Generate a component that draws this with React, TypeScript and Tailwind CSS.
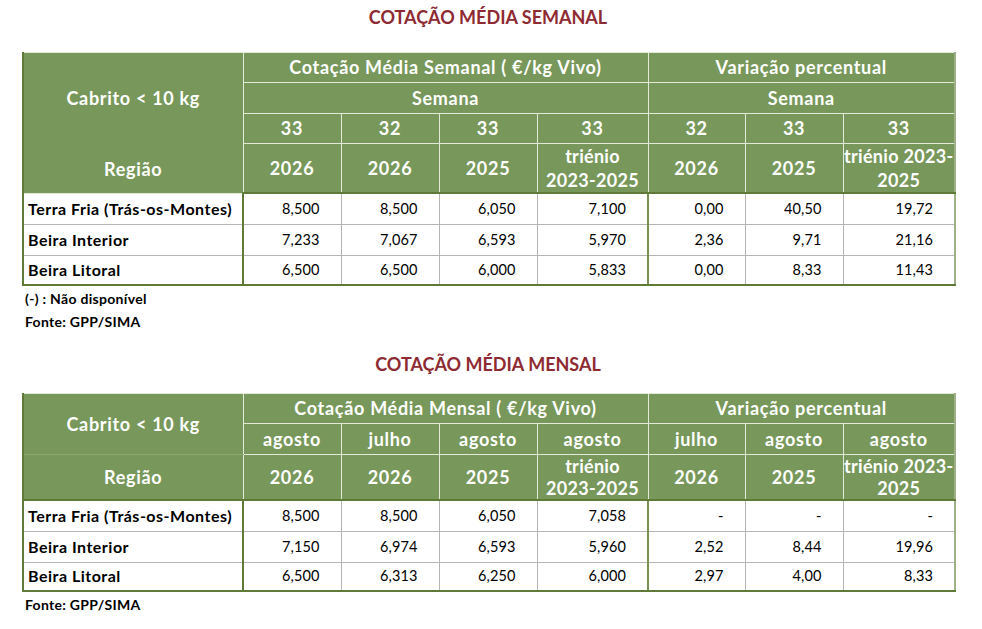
import React from "react";

const G = "bg-[#77985a]";
const hdr = `${G} text-white font-bold text-center align-middle border border-[#e3ead7] leading-[1.15] tracking-[0.7px]`;

type Row = { name: string; v: string[] };

const semanal: Row[] = [
  { name: "Terra Fria (Trás-os-Montes)", v: ["8,500", "8,500", "6,050", "7,100", "0,00", "40,50", "19,72"] },
  { name: "Beira Interior", v: ["7,233", "7,067", "6,593", "5,970", "2,36", "9,71", "21,16"] },
  { name: "Beira Litoral", v: ["6,500", "6,500", "6,000", "5,833", "0,00", "8,33", "11,43"] },
];

const mensal: Row[] = [
  { name: "Terra Fria (Trás-os-Montes)", v: ["8,500", "8,500", "6,050", "7,058", "-", "-", "-"] },
  { name: "Beira Interior", v: ["7,150", "6,974", "6,593", "5,960", "2,52", "8,44", "19,96"] },
  { name: "Beira Litoral", v: ["6,500", "6,313", "6,250", "6,000", "2,97", "4,00", "8,33"] },
];

function Cols() {
  return (
    <colgroup>
      <col className="w-[220px]" />
      <col className="w-[98px]" />
      <col className="w-[98px]" />
      <col className="w-[98px]" />
      <col className="w-[111px]" />
      <col className="w-[97px]" />
      <col className="w-[98px]" />
      <col className="w-[112px]" />
    </colgroup>
  );
}

function Body({ rows, last }: { rows: Row[]; last: string }) {
  return (
    <tbody>
      {rows.map((r, i) => (
        <tr key={r.name} className={i === rows.length - 1 ? last : "h-[31px]"}>
          <td className={`font-bold text-[16px] tracking-[0.5px] text-black pl-[4px] whitespace-nowrap border-l-2 border-l-[#5f7a37] border-r-2 border-r-[#5f7a37] border-b ${i === rows.length - 1 ? "border-b-2 border-b-[#5f7a37]" : "border-b-[#b5b5b5]"}`}>
            {r.name}
          </td>
          {r.v.map((x, j) => (
            <td
              key={j}
              className={`text-right pr-[21px] text-[14.5px] tracking-[0.1px] text-black border-b ${i === rows.length - 1 ? "border-b-2 border-b-[#5f7a37]" : "border-b-[#b5b5b5]"} ${j === 3 ? "border-r-2 border-r-[#7a9154]" : j === 6 ? "border-r-2 border-r-[#9fb089]" : "border-r border-r-[#b5b5b5]"}`}
            >
              {x}
            </td>
          ))}
        </tr>
      ))}
    </tbody>
  );
}

export default function App() {
  return (
    <div className="w-[982px] h-[629px] bg-white relative" style={{ fontFamily: "Lato, 'Liberation Sans', sans-serif" }}>
      <div className="pl-[22px]">
        <div className="w-[932px] h-[34px] flex items-center justify-center text-[#8e2a32] font-bold text-[18px] pt-[1px]">
          COTAÇÃO MÉDIA SEMANAL
        </div>
        <div className="h-[18px]" />
        <table className="border-collapse table-fixed w-[932px] border-t border-t-[#a3ab95]">
          <Cols />
          <thead className="text-[18px]">
            <tr className="h-[30px]">
              <td rowSpan={4} className={`${hdr} border-l-2 border-l-[#5f7a37] !align-top p-0`}>
                <div className="flex flex-col items-center h-[139px]">
                  <div className="h-[91px] flex items-center">Cabrito &lt; 10 kg</div>
                  <div className="flex-1 flex items-center pt-[2px]">Região</div>
                </div>
              </td>
              <td colSpan={4} className={hdr}>Cotação Média Semanal ( €/kg Vivo)</td>
              <td colSpan={3} className={`${hdr} border-r-2 border-r-[#9fb089]`}>Variação percentual</td>
            </tr>
            <tr className="h-[31px]">
              <td colSpan={4} className={hdr}>Semana</td>
              <td colSpan={3} className={`${hdr} border-r-2 border-r-[#9fb089]`}>Semana</td>
            </tr>
            <tr className="h-[30px]">
              <td className={hdr}>33</td>
              <td className={hdr}>32</td>
              <td className={hdr}>33</td>
              <td className={hdr}>33</td>
              <td className={hdr}>32</td>
              <td className={hdr}>33</td>
              <td className={`${hdr} border-r-2 border-r-[#9fb089]`}>33</td>
            </tr>
            <tr className="h-[48px]">
              <td className={`${hdr} border-b-2 border-b-[#5f7a37]`}>2026</td>
              <td className={`${hdr} border-b-2 border-b-[#5f7a37]`}>2026</td>
              <td className={`${hdr} border-b-2 border-b-[#5f7a37]`}>2025</td>
              <td className={`${hdr} border-b-2 border-b-[#5f7a37] !leading-[24px] !tracking-[0.3px]`}>triénio<br />2023-2025</td>
              <td className={`${hdr} border-b-2 border-b-[#5f7a37]`}>2026</td>
              <td className={`${hdr} border-b-2 border-b-[#5f7a37]`}>2025</td>
              <td className={`${hdr} border-b-2 border-b-[#5f7a37] border-r-2 border-r-[#9fb089] !leading-[24px] !tracking-[0.3px] whitespace-nowrap overflow-hidden`}>triénio 2023-<br />2025</td>
            </tr>
          </thead>
          <Body rows={semanal} last="h-[30px]" />
        </table>
        <div className="text-[14px] tracking-[0.3px] font-bold text-black pl-[3px] leading-[23px] pt-[1px]">
          <div>(-) : Não disponível</div>
          <div>Fonte: GPP/SIMA</div>
        </div>
        <div className="w-[932px] h-[34px] mt-[14px] flex items-center justify-center text-[#8e2a32] font-bold text-[18px]">
          COTAÇÃO MÉDIA MENSAL
        </div>
        <div className="h-[12px]" />
        <table className="border-collapse table-fixed w-[932px] border-t border-t-[#a3ab95]">
          <Cols />
          <thead className="text-[18px]">
            <tr className="h-[30px]">
              <td rowSpan={2} className={`${hdr} border-l-2 border-l-[#5f7a37] border-b-[#8daa6e]`}>Cabrito &lt; 10 kg</td>
              <td colSpan={4} className={hdr}>Cotação Média Mensal ( €/kg Vivo)</td>
              <td colSpan={3} className={`${hdr} border-r-2 border-r-[#9fb089]`}>Variação percentual</td>
            </tr>
            <tr className="h-[31px]">
              <td className={hdr}>agosto</td>
              <td className={hdr}>julho</td>
              <td className={hdr}>agosto</td>
              <td className={hdr}>agosto</td>
              <td className={hdr}>julho</td>
              <td className={hdr}>agosto</td>
              <td className={`${hdr} border-r-2 border-r-[#9fb089]`}>agosto</td>
            </tr>
            <tr className="h-[45px]">
              <td className={`${hdr} border-l-2 border-l-[#5f7a37] border-t-[#8daa6e] border-b-2 border-b-[#5f7a37]`}>Região</td>
              <td className={`${hdr} border-b-2 border-b-[#5f7a37]`}>2026</td>
              <td className={`${hdr} border-b-2 border-b-[#5f7a37]`}>2026</td>
              <td className={`${hdr} border-b-2 border-b-[#5f7a37]`}>2025</td>
              <td className={`${hdr} border-b-2 border-b-[#5f7a37] !leading-[22px] !tracking-[0.3px]`}>triénio<br />2023-2025</td>
              <td className={`${hdr} border-b-2 border-b-[#5f7a37]`}>2026</td>
              <td className={`${hdr} border-b-2 border-b-[#5f7a37]`}>2025</td>
              <td className={`${hdr} border-b-2 border-b-[#5f7a37] border-r-2 border-r-[#9fb089] !leading-[22px] !tracking-[0.3px] whitespace-nowrap overflow-hidden`}>triénio 2023-<br />2025</td>
            </tr>
          </thead>
          <Body rows={mensal} last="h-[29px]" />
        </table>
        <div className="text-[14px] tracking-[0.3px] font-bold text-black pl-[3px] leading-[23px] pt-[1px]">
          <div>Fonte: GPP/SIMA</div>
        </div>
      </div>
    </div>
  );
}
